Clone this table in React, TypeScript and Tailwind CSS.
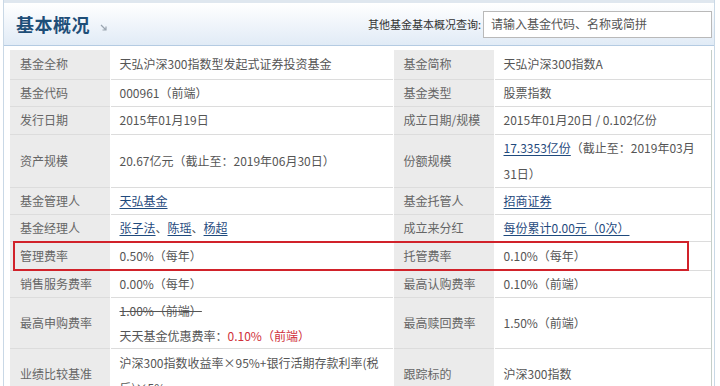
import React from 'react';

type Cell = React.ReactNode;

interface Row {
  h: number;
  l1: string;
  v1: Cell;
  l2: string;
  v2: Cell;
}

const Link: React.FC<{ children: React.ReactNode }> = ({ children }) => (
  <a className="text-[#1f4a7d] underline underline-offset-2">{children}</a>
);

const rows: Row[] = [
  { h: 29, l1: '基金全称', v1: '天弘沪深300指数型发起式证券投资基金', l2: '基金简称', v2: '天弘沪深300指数A' },
  { h: 27, l1: '基金代码', v1: '000961（前端）', l2: '基金类型', v2: '股票指数' },
  { h: 28, l1: '发行日期', v1: '2015年01月19日', l2: '成立日期/规模', v2: '2015年01月20日 / 0.102亿份' },
  {
    h: 53,
    l1: '资产规模',
    v1: '20.67亿元（截止至：2019年06月30日）',
    l2: '份额规模',
    v2: (
      <span className="block leading-[26px]">
        <Link>17.3353亿份</Link>（截止至：2019年03月
        <br />
        31日）
      </span>
    ),
  },
  { h: 27, l1: '基金管理人', v1: <Link>天弘基金</Link>, l2: '基金托管人', v2: <Link>招商证券</Link> },
  {
    h: 27,
    l1: '基金经理人',
    v1: (
      <>
        <Link>张子法</Link>、<Link>陈瑶</Link>、<Link>杨超</Link>
      </>
    ),
    l2: '成立来分红',
    v2: <Link>每份累计0.00元（0次）</Link>,
  },
  { h: 29, l1: '管理费率', v1: '0.50%（每年）', l2: '托管费率', v2: '0.10%（每年）' },
  { h: 27, l1: '销售服务费率', v1: '0.00%（每年）', l2: '最高认购费率', v2: '0.10%（前端）' },
  {
    h: 49,
    l1: '最高申购费率',
    v1: (
      <span className="block leading-[25px]">
        <span className="line-through">1.00%（前端）</span>
        <br />
        天天基金优惠费率：<span className="text-[#d0303a]">0.10%（前端）</span>
      </span>
    ),
    l2: '最高赎回费率',
    v2: '1.50%（前端）',
  },
  {
    h: 52,
    l1: '业绩比较基准',
    v1: (
      <span className="block leading-[25px] pt-[1px]">
        沪深300指数收益率×95%+银行活期存款利率(税
        <br />
        后)×5%
      </span>
    ),
    l2: '跟踪标的',
    v2: '沪深300指数',
  },
];

const App: React.FC = () => {
  return (
    <div
      className="relative w-[720px] h-[386px] overflow-hidden bg-white"
      style={{ fontFamily: '"Noto Sans CJK SC", "Liberation Sans", sans-serif' }}
    >
      <div className="ml-[3px] w-[712px] h-full border-l border-r border-[#c9d8e6] flex flex-col">
        {/* header */}
        <div className="h-[46px] shrink-0 border-t-[3px] border-t-[#dfe7ef] border-b border-b-[#b4cbe2] bg-gradient-to-b from-white to-[#e1ebf6] flex items-center justify-between pl-[12px] pr-[2px]">
          <div className="flex items-end gap-[10px]">
            <h2 className="text-[18px] font-bold text-[#1e4e78] leading-none tracking-[0.5px]">基本概况</h2>
            <svg width="8" height="8" viewBox="0 0 8 8" className="mb-[1px]">
              <path d="M1 1 L6 6 M6 2.5 V6 H2.5" stroke="#9aa5b0" strokeWidth="1.2" fill="none" />
            </svg>
          </div>
          <div className="flex items-center gap-[2px]">
            <span className="text-[11px] text-[#333]">其他基金基本概况查询:</span>
            <div className="w-[229px] h-[27px] border border-[#b9b9b9] bg-white flex items-center pl-[7px] text-[12px] text-[#555]">
              请输入基金代码、名称或简拼
            </div>
          </div>
        </div>

        {/* table */}
        <div className="mt-[4px] ml-[6px] w-[702px] border-r border-[#c5cfc9]">
          <table className="table-fixed border-collapse w-full text-[12px] text-[#555]">
            <colgroup>
              <col className="w-[100px]" />
              <col className="w-[283px]" />
              <col className="w-[101px]" />
              <col />
            </colgroup>
            <tbody>
              {rows.map((r, i) => (
                <tr key={i} style={{ height: r.h }} className="border-b border-[#dcdcdc]">
                  <td className="bg-[#ebebeb] text-[#666] pl-[10px] border-r border-white">{r.l1}</td>
                  <td className="pl-[9px] align-middle">{r.v1}</td>
                  <td className="bg-[#ebebeb] text-[#666] pl-[10px] border-x border-white">{r.l2}</td>
                  <td className="pl-[9px] align-middle">{r.v2}</td>
                </tr>
              ))}
            </tbody>
          </table>
        </div>
      </div>

      {/* highlight box */}
      <div className="absolute left-[13px] top-[241px] w-[676px] h-[30px] border-2 border-[#d1222a] pointer-events-none" />
    </div>
  );
};

export default App;
